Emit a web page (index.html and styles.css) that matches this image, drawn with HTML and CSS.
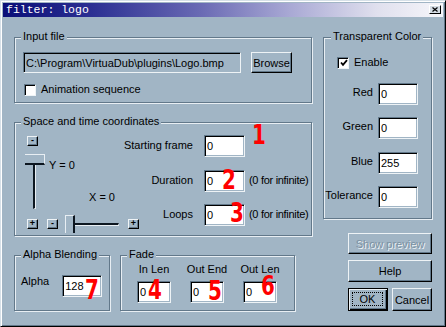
FILE: index.html
```html
<!DOCTYPE html>
<html>
<head>
    <title>filter: logo</title>
    <link rel="stylesheet" href="styles.css">
</head>
<body>
<div class="window">
    <!-- title bar -->
    <div class="titlebar">
        <span class="title">filter: logo</span>
        <span class="close">
            <svg width="6" height="5" viewBox="0 0 6 5"><path d="M0.5 0.5L5.5 4.5M5.5 0.5L0.5 4.5" stroke="#000" stroke-width="1.2" fill="none"/></svg>
        </span>
    </div>

    <div class="main">
        <div class="leftcol">

            <div class="group input-file">
                <div class="caption">Input file</div>
                <div class="file-row">
                    <input class="edit filename" type="text" value="C:\Program\VirtuaDub\plugins\Logo.bmp" readonly>
                    <button class="btn browse">Browse</button>
                </div>
                <div class="checkrow">
                    <span class="check"></span>
                    <span>Animation sequence</span>
                </div>
            </div>

            <div class="group coords">
                <div class="caption">Space and time coordinates</div>
                <div class="coords-body">
                    <div class="sliders">
                        <div class="vpart">
                            <div class="vcol">
                                <span class="sbtn">-</span>
                                <span class="vthumb"></span>
                                <span class="vgroove"></span>
                            </div>
                            <div class="xylabels">
                                <span class="ylabel">Y = 0</span>
                                <span class="xlabel">X = 0</span>
                            </div>
                        </div>
                        <div class="hpart">
                            <span class="sbtn">+</span>
                            <span class="sbtn gap9">-</span>
                            <span class="hthumb"></span>
                            <span class="hgroove"></span>
                            <span class="sbtn gap9">+</span>
                        </div>
                    </div>

                    <div class="fields">
                        <span class="flabel">Starting frame</span>
                        <span class="fbox"><input class="edit" type="text" value="0"><span class="num n1">1</span></span>
                        <span></span>
                        <span class="flabel">Duration</span>
                        <span class="fbox"><input class="edit" type="text" value="0"><span class="num n2">2</span></span>
                        <span class="note">(0 for infinite)</span>
                        <span class="flabel">Loops</span>
                        <span class="fbox"><input class="edit" type="text" value="0"><span class="num n3">3</span></span>
                        <span class="note">(0 for infinite)</span>
                    </div>
                </div>
            </div>

            <div class="bottom-row">
                <div class="group alpha">
                    <div class="caption">Alpha Blending</div>
                    <div class="alpha-row">
                        <span class="alpha-label">Alpha</span>
                        <span class="fbox alpha-box"><input class="edit" type="text" value="128"><span class="num n7">7</span></span>
                    </div>
                </div>
                <div class="group fade">
                    <div class="caption">Fade</div>
                    <div class="fade-cols">
                        <div class="fcol">
                            <span class="flab">In Len</span>
                            <span class="fbox"><input class="edit" type="text" value="0"><span class="num n4">4</span></span>
                        </div>
                        <div class="fcol">
                            <span class="flab">Out End</span>
                            <span class="fbox"><input class="edit" type="text" value="0"><span class="num n5">5</span></span>
                        </div>
                        <div class="fcol">
                            <span class="flab">Out Len</span>
                            <span class="fbox"><input class="edit" type="text" value="0"><span class="num n6">6</span></span>
                        </div>
                    </div>
                </div>
            </div>
        </div>

        <div class="rightcol">
            <div class="group transparent">
                <div class="caption">Transparent Color</div>
                <div class="checkrow enable">
                    <span class="check">
                        <svg width="8" height="8" viewBox="0 0 8 8"><path d="M1 3.5L3 5.8L7 1.2" stroke="#000" stroke-width="1.8" fill="none"/></svg>
                    </span>
                    <span>Enable</span>
                </div>
                <div class="colors">
                    <span class="clabel">Red</span>
                    <input class="edit" type="text" value="0">
                    <span class="clabel">Green</span>
                    <input class="edit" type="text" value="0">
                    <span class="clabel">Blue</span>
                    <input class="edit" type="text" value="255">
                    <span class="clabel">Tolerance</span>
                    <input class="edit" type="text" value="0">
                </div>
            </div>

            <div class="buttons">
                <button class="btn preview" disabled>Show preview</button>
                <button class="btn help">Help</button>
                <div class="okrow">
                    <button class="btn ok"><span class="focus">OK</span></button>
                    <button class="btn cancel">Cancel</button>
                </div>
            </div>
        </div>
    </div>
</div>
</body>
</html>
```

FILE: styles.css
```css
body {
    margin: 0;
    background-color: #a1b5c5;
    font-family: "Liberation Sans", Arial, sans-serif;
    font-size: 11px;
    color: #000;
}

/* window frame */
.window {
    width: 446px;
    height: 327px;
    box-sizing: border-box;
    padding: 2px;
    background-color: #a1b5c5;
    border: 1px solid;
    border-color: #d6e0e8 #000 #000 #d6e0e8;
    box-shadow: inset 1px 1px 0 #fff, inset -1px -1px 0 #62788a;
}
.titlebar {
    height: 14px;
    display: flex;
    justify-content: space-between;
    align-items: flex-start;
    padding: 0 2px 0 3px;
    background: linear-gradient(to right, #0a0e78 0%, #2b2f92 20%, #6a6ab4 45%, #a8a8d4 65%, #e0e0ee 85%, #f6f6fa 100%);
}
.title {
    font-family: "Liberation Mono", monospace;
    font-size: 11.5px;
    line-height: 14px;
    color: #fff;
}
.close {
    margin-top: 2px;
    width: 12px;
    height: 9px;
    box-sizing: border-box;
    border: 1px solid;
    border-color: #fff #000 #000 #fff;
    background-color: #d4dce4;
    display: flex;
    align-items: center;
    justify-content: center;
}
.close svg { display: block; }

.main {
    display: flex;
    gap: 11px;
    padding: 20px 0 0 11px;
}
.leftcol { width: 298px; }
.rightcol {
    width: 109px;
    display: flex;
    flex-direction: column;
}

/* group boxes */
.group {
    box-sizing: border-box;
    border: 1px solid #62788a;
    box-shadow: 1px 1px 0 #e8eef3, inset 1px 1px 0 #e8eef3;
}
.caption {
    margin: -8px 0 0 6px;
    padding: 0 2px;
    width: fit-content;
    line-height: 13px;
    white-space: nowrap;
    background-color: #a1b5c5;
}
.transparent .caption { margin-left: 7px; }

/* edits and buttons */
.edit {
    display: block;
    box-sizing: border-box;
    width: 100%;
    height: 22px;
    margin: 0;
    padding: 0 2px;
    border: 1px solid;
    border-color: #62788a #eef3f6 #eef3f6 #62788a;
    box-shadow: inset 1px 1px 0 #000, inset -1px -1px 0 #a1b5c5;
    background-color: #fff;
    font-family: "Liberation Sans", Arial, sans-serif;
    font-size: 11px;
    color: #000;
    outline: none;
}
.btn {
    box-sizing: border-box;
    height: 21px;
    margin: 0;
    padding: 0;
    border: 1px solid;
    border-color: #eef3f6 #000 #000 #eef3f6;
    box-shadow: inset -1px -1px 0 #62788a;
    background-color: #a1b5c5;
    font-family: "Liberation Sans", Arial, sans-serif;
    font-size: 11px;
    color: #000;
}
.check {
    width: 12px;
    height: 12px;
    box-sizing: border-box;
    border: 1px solid;
    border-color: #62788a #eef3f6 #eef3f6 #62788a;
    box-shadow: inset 1px 1px 0 #000;
    background-color: #fff;
    display: flex;
    align-items: center;
    justify-content: center;
}
.check svg { display: block; margin: 1px 0 0 1px; }
.checkrow {
    display: flex;
    align-items: center;
    gap: 5px;
    line-height: 13px;
}

/* input file */
.input-file { height: 66px; }
.file-row {
    display: flex;
    margin: 9px 0 0 8px;
}
.filename {
    width: 218px;
    height: 21px;
    background-color: #a1b5c5;
    box-shadow: inset 1px 1px 0 #000;
}
.browse {
    width: 41px;
    margin-left: 10px;
}
.input-file .checkrow { margin: 10px 0 0 9px; }

/* space and time */
.coords {
    height: 114px;
    margin-top: 19px;
}
.coords-body {
    display: grid;
    margin: 7px 0 0 10px;
}
.sliders, .fields { grid-area: 1 / 1; }
.sliders { margin-top: 1px; }
.sbtn {
    width: 11px;
    height: 10px;
    box-sizing: border-box;
    border: 1px solid;
    border-color: #eef3f6 #000 #000 #eef3f6;
    box-shadow: inset -1px -1px 0 #62788a;
    font-size: 9px;
    line-height: 7px;
    text-align: center;
    font-weight: bold;
}
.vpart { display: flex; }
.vcol {
    width: 20px;
    display: flex;
    flex-direction: column;
    align-items: flex-start;
}
.vcol .sbtn { margin-left: 2px; }
.vthumb {
    width: 20px;
    height: 11px;
    margin-top: 8px;
    box-sizing: border-box;
    border-top: 1px solid #e8eef3;
    border-right: 1px solid #e8eef3;
    border-bottom: 2px solid #0c1620;
}
.vgroove {
    width: 3px;
    height: 44px;
    margin-left: 8px;
    box-sizing: border-box;
    border-left: 2px solid #0c1620;
    border-right: 1px solid #e8eef3;
    border-bottom: 1px solid #e8eef3;
}
.xylabels {
    display: flex;
    flex-direction: column;
    align-items: flex-start;
    margin-left: 4px;
    line-height: 13px;
}
.ylabel { margin-top: 23px; }
.xlabel { margin: 19px 0 0 40px; }
.hpart {
    display: flex;
    align-items: center;
    height: 18px;
    margin-top: 6px;
}
.hpart .sbtn:first-child { margin-left: 2px; }
.hpart .gap9 { margin-left: 9px; }
.hthumb {
    width: 10px;
    height: 18px;
    margin-left: 7px;
    box-sizing: border-box;
    border-left: 1px solid #e8eef3;
    border-top: 1px solid #e8eef3;
    border-right: 2px solid #0c1620;
}
.hgroove {
    width: 44px;
    height: 3px;
    box-sizing: border-box;
    border-top: 2px solid #0c1620;
    border-bottom: 1px solid #e8eef3;
    border-right: 1px solid #e8eef3;
}
.fields {
    display: grid;
    grid-template-columns: 91px 41px auto;
    grid-template-rows: 35px 34px 22px;
    align-items: start;
    margin-left: 88px;
}
.flabel {
    justify-self: end;
    padding-right: 11px;
    line-height: 20px;
    white-space: nowrap;
}
.note {
    padding-left: 4px;
    line-height: 20px;
    white-space: nowrap;
    letter-spacing: -0.3px;
}
.fbox {
    position: relative;
    display: block;
    height: 22px;
}

/* red markers over the edits */
.num {
    position: absolute;
    color: #ff0000;
    font-family: "DejaVu Sans Condensed", "DejaVu Sans", sans-serif;
    font-stretch: condensed;
    font-weight: bold;
    font-size: 26px;
    line-height: 20px;
    transform: scaleX(0.85);
    transform-origin: left top;
    pointer-events: none;
}
.n1 { left: 48px; top: -10px; }
.n2 { left: 18px; top: 0; }
.n3 { left: 26px; top: -1px; }
.n4 { left: 11px; top: -1px; }
.n5 { left: 18px; top: 0; }
.n6 { left: 18px; top: -5px; }
.n7 { left: 23px; top: 5px; }

/* bottom groups */
.bottom-row {
    display: flex;
    gap: 10px;
    margin-top: 19px;
}
.alpha { width: 96px; height: 56px; }
.fade { width: 175px; height: 56px; }
.alpha-row {
    display: flex;
    align-items: flex-start;
    margin: 14px 0 0 6px;
}
.alpha-label { line-height: 13px; }
.alpha-box {
    width: 40px;
    margin-left: 13px;
}
.fade-cols {
    display: flex;
    gap: 19px;
    margin: 2px 0 0 16px;
}
.fcol {
    width: 34px;
    display: flex;
    flex-direction: column;
    align-items: center;
}
.flab {
    line-height: 12px;
    margin-bottom: 1px;
    white-space: nowrap;
}
.fcol .fbox {
    width: 34px;
    margin-top: 5px;
}

/* transparent color */
.transparent { height: 182px; }
.enable { margin: 13px 0 0 13px; }
.colors {
    display: grid;
    grid-template-columns: 49px 40px;
    grid-template-rows: 34px 35px 34px 22px;
    column-gap: 5px;
    align-items: start;
    margin-top: 14px;
}
.clabel {
    justify-self: end;
    line-height: 19px;
    white-space: nowrap;
}

/* dialog buttons */
.buttons {
    width: 84px;
    display: flex;
    flex-direction: column;
    gap: 6px;
    margin: 14px 0 0 25px;
}
.preview {
    color: #7b91a2;
    text-shadow: 1px 1px 0 #eef3f6;
}
.help { height: 22px; }
.okrow {
    display: flex;
    gap: 4px;
}
.okrow .btn {
    width: 40px;
    height: 23px;
}
.ok {
    border-color: #000;
    box-shadow: inset 1px 1px 0 #eef3f6, inset -1px -1px 0 #000, inset -2px -2px 0 #62788a;
    display: flex;
    align-items: stretch;
    padding: 3px 4px 4px 3px;
}
.focus {
    flex: 1;
    border: 1px dotted #000;
    display: flex;
    align-items: center;
    justify-content: center;
}
```
